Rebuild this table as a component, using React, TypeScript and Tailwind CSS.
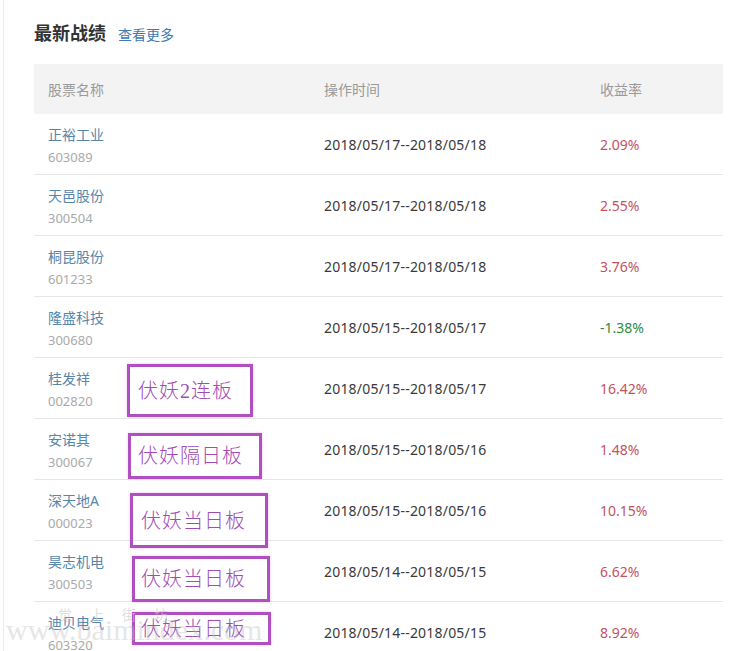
const rows = [
  { name: '正裕工业', code: '603089', time: '2018/05/17--2018/05/18', rate: '2.09%' },
  { name: '天邑股份', code: '300504', time: '2018/05/17--2018/05/18', rate: '2.55%' },
  { name: '桐昆股份', code: '601233', time: '2018/05/17--2018/05/18', rate: '3.76%' },
  { name: '隆盛科技', code: '300680', time: '2018/05/15--2018/05/17', rate: '-1.38%' },
  { name: '桂发祥', code: '002820', time: '2018/05/15--2018/05/17', rate: '16.42%' },
  { name: '安诺其', code: '300067', time: '2018/05/15--2018/05/16', rate: '1.48%' },
  { name: '深天地A', code: '000023', time: '2018/05/15--2018/05/16', rate: '10.15%' },
  { name: '昊志机电', code: '300503', time: '2018/05/14--2018/05/15', rate: '6.62%' },
  { name: '迪贝电气', code: '603320', time: '2018/05/14--2018/05/15', rate: '8.92%' },
];

// hand-drawn annotation boxes laid over the table
const notes = [
  { text: '伏妖2连板', box: 'left-[127px] top-[364px] w-[126px] h-[53px] pl-[8px]' },
  { text: '伏妖隔日板', box: 'left-[128px] top-[433px] w-[134px] h-[46px] pl-[7px]' },
  { text: '伏妖当日板', box: 'left-[130px] top-[493px] w-[138px] h-[55px] pl-[8px]' },
  { text: '伏妖当日板', box: 'left-[132px] top-[556px] w-[138px] h-[46px] pl-[6px]' },
  { text: '伏妖当日板', box: 'left-[132px] top-[612px] w-[139px] h-[33px] pl-[6px]' },
];

const sans = "font-['Noto_Sans','Noto_Sans_CJK_SC',sans-serif]";

function Row({ r }: { r: (typeof rows)[number] }) {
  const down = r.rate.startsWith('-');
  return (
    <div className="grid grid-cols-[276px_276px_1fr] h-[61px] items-center border-b border-[#e6e6e6]">
      <div className="pl-[14px] pt-[4px] flex flex-col">
        <span className="text-[14px] leading-[20px] text-[#5686ab]">{r.name}</span>
        <span className="text-[13px] leading-[20px] mt-[2px] text-[#aaaaaa]">{r.code}</span>
      </div>
      <div className="pl-[14px] text-[14px] text-[#3a3a3a] tracking-[0.2px]">{r.time}</div>
      <div className={`pl-[14px] text-[14px] ${down ? 'text-[#2f8b3c]' : 'text-[#c4525f]'}`}>{r.rate}</div>
    </div>
  );
}

export default function App() {
  return (
    <div className={`relative w-[746px] h-[651px] overflow-hidden bg-white ${sans}`}>
      <div className="ml-[3px] border-l border-[#ececec] pl-[30px] pt-[22px] min-h-[700px]">
        <div className="flex items-baseline gap-[12px] h-[24px]">
          <h2 className="text-[18px] font-bold text-[#333] leading-[22px]">最新战绩</h2>
          <a className="text-[14px] text-[#3f79b1]">查看更多</a>
        </div>

        <div className="w-[689px] mt-[18px]">
          <div className="grid grid-cols-[276px_276px_1fr] h-[50px] items-center bg-[#f3f3f3] text-[14px] text-[#999]">
            <div className="pl-[14px]">股票名称</div>
            <div className="pl-[14px]">操作时间</div>
            <div className="pl-[14px]">收益率</div>
          </div>
          {rows.map((r) => (
            <Row key={r.code} r={r} />
          ))}
        </div>
      </div>

      {notes.map((n, i) => (
        <div
          key={i}
          className={`absolute ${n.box} flex items-center border-[3px] border-[#b04fc0] shadow-[0_0_3px_#f3c6f3] text-[20px] text-[#a14cb4] font-['Liberation_Serif','Noto_Sans_CJK_SC',serif] font-light tracking-[1px]`}
        >
          {n.text}
        </div>
      ))}

      {/* faint site watermark */}
      <div className="absolute left-[58px] top-[604px] text-[14px] tracking-[18px] text-[#c8c8c8]/60">觉上街坊</div>
      <div className="absolute left-[6px] top-[612px] text-[30px] leading-[36px] text-[#bdbdbd]/40 font-['Liberation_Serif',serif]">www.baimindex.com</div>
    </div>
  );
}
